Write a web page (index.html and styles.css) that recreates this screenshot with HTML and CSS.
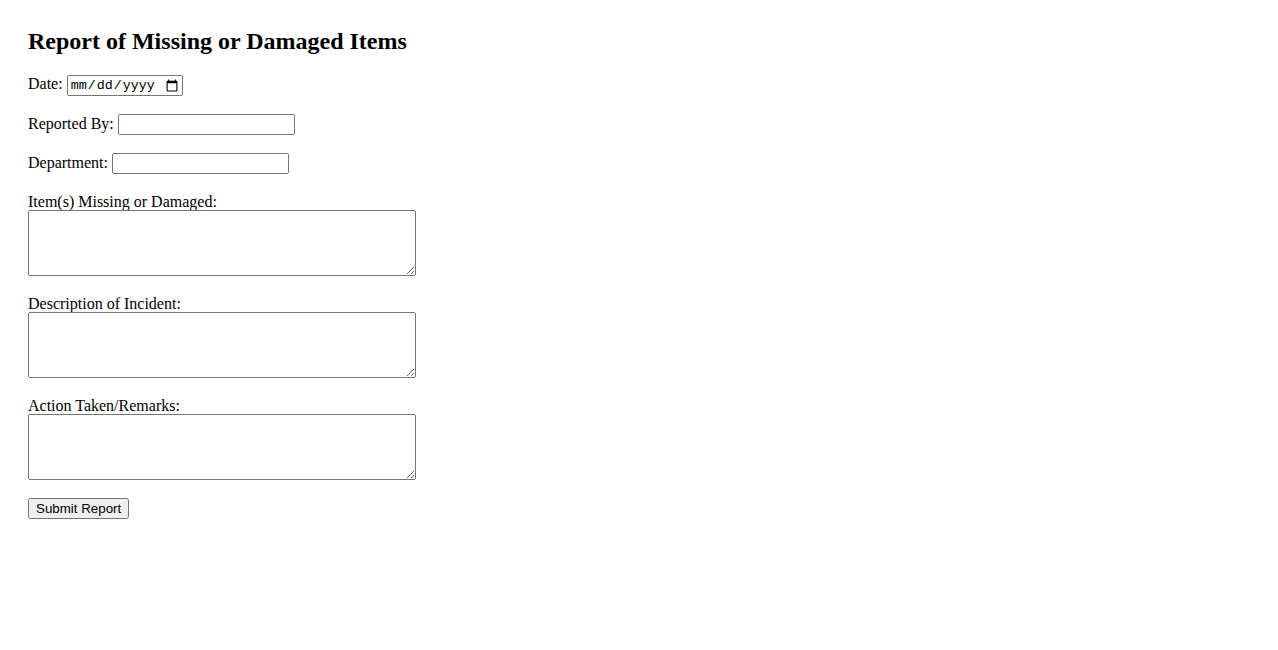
FILE: index.html
```html
<!DOCTYPE html>
<html>
<head>
<meta charset="utf-8">
<title>Report of Missing or Damaged Items</title>
<link rel="stylesheet" href="styles.css">
</head>
<body>
<h2 class="title">Report of Missing or Damaged Items</h2>
<form class="report">
  <div class="field field-inline">
    <label for="date">Date:</label>
    <input type="date" id="date" class="date-input">
  </div>
  <div class="field field-inline">
    <label for="by">Reported By:</label>
    <input type="text" id="by" class="text-input">
  </div>
  <div class="field field-inline">
    <label for="dept">Department:</label>
    <input type="text" id="dept" class="text-input">
  </div>
  <div class="field field-block">
    <label for="items" class="block-label">Item(s) Missing or Damaged:</label>
    <textarea id="items" class="area"></textarea>
  </div>
  <div class="field field-block">
    <label for="desc" class="block-label">Description of Incident:</label>
    <textarea id="desc" class="area"></textarea>
  </div>
  <div class="field field-block">
    <label for="action" class="block-label">Action Taken/Remarks:</label>
    <textarea id="action" class="area"></textarea>
  </div>
  <button type="submit" class="submit">Submit Report</button>
</form>
</body>
</html>
```
FILE: styles.css
```css
body {
  margin: 8px;
  padding: 20px;
  font-family: "Liberation Serif", "Times New Roman", serif;
  font-size: 16px;
  color: #000;
  background: #fff;
}
.title {
  font-size: 24px;
  font-weight: bold;
  margin: 0 0 20px 0;
}
.field-inline {
  margin-bottom: 18px;
}
.field-block {
  margin-bottom: 14px;
}
.block-label {
  display: block;
  padding-top: 1px;
  line-height: 17px;
}
.date-input {
  font-family: "Liberation Mono", monospace;
  font-size: 13.33px;
  width: 116px;
  height: 21px;
  box-sizing: border-box;
}
.text-input {
  font-family: "Liberation Sans", Arial, sans-serif;
  font-size: 13.33px;
  width: 177px;
  height: 21px;
  box-sizing: border-box;
}
.area {
  width: 388px;
  height: 66px;
  box-sizing: border-box;
}
.submit {
  font-family: "Liberation Sans", Arial, sans-serif;
  font-size: 13.33px;
}
```
